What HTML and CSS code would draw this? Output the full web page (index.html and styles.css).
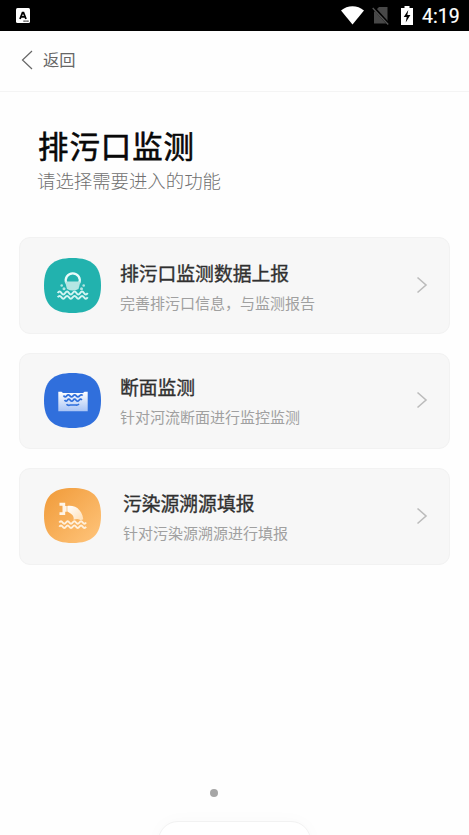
FILE: index.html
```html
<!DOCTYPE html>
<html lang="zh-CN">
<head>
<meta charset="utf-8">
<meta name="viewport" content="width=device-width, initial-scale=1">
<title>排污口监测</title>
<link rel="stylesheet" href="styles.css">
</head>
<body>
<div class="screen">
  <header class="status">
    <svg class="status-app" width="14" height="15" viewBox="0 0 14 15"><rect width="14" height="15" rx="1.5" fill="#fff"/><path d="M4 11 6.500 4.600h1L10 11M5 8.800h4" fill="none" stroke="#000" stroke-width="1.800"/><path d="M7.500 13.200h5" stroke="#000" stroke-width="1.200" stroke-dasharray="1.200 .7"/></svg>
    <div class="status-right">
      <svg width="23" height="19" viewBox="0 0 23 19"><path d="M0 4.500C6.500-1.300 16.500-1.300 23 4.500L11.500 18.500Z" fill="#fff"/></svg>
      <svg class="sim" width="18" height="19" viewBox="0 0 18 19"><path d="M7 1h8.500v16.500H2V6Z" fill="#484848"/><path d="M1.500 1.500 16.500 18" stroke="#000" stroke-width="3"/><path d="M.7 2 16.200 18.500" stroke="#555" stroke-width="1.300"/></svg>
      <svg class="battery" width="12" height="19" viewBox="0 0 12 19"><path d="M3.500 0h5v2H12v17H0V2h3.500Z" fill="#fff"/><path d="M7.300 4 2.700 11h3L4.700 16.500 9.400 9H6.300Z" fill="#000"/></svg>
      <span class="clock">4:19</span>
    </div>
  </header>
  <nav class="nav">
    <svg width="12" height="20" viewBox="0 0 12 20"><path d="M11 1 1.500 10 11 19" fill="none" stroke="#666" stroke-width="1.200"/></svg>
    <span>返回</span>
  </nav>
  <main class="main">
    <h1 class="title">排污口监测</h1>
    <p class="subtitle">请选择需要进入的功能</p>
    <div class="cards">
      <a class="card card-first">
        <svg class="icon" viewBox="0 0 57 55">
          <path d="M28.500 0C48 0 57 8 57 27.500S48 55 28.500 55 0 47 0 27.500 9 0 28.500 0Z" fill="#22b2ae"/>
          <path d="M22.300 25A7 7 0 1 1 35.200 25" fill="none" stroke="#e9fbfa" stroke-width="2.300"/>
          <path d="M21 23.500h15.500l-2 7.500q-5.700 3-11.500 0Z" fill="#b5e6e3"/>
          <g fill="#b5e6e3"><circle cx="17.700" cy="27.500" r="1.300"/><circle cx="20" cy="30.700" r="1.500"/><circle cx="39.700" cy="27.500" r="1.300"/><circle cx="37.500" cy="30.700" r="1.500"/></g>
          <path d="M13.700 35q1.900-2.800 3.750 0t3.750 0 3.750 0 3.750 0 3.750 0 3.750 0 3.750 0 3.750 0M13.700 39.300q1.900-2.800 3.750 0t3.750 0 3.750 0 3.750 0 3.750 0 3.750 0 3.750 0 3.750 0" fill="none" stroke="#d2f4f2" stroke-width="2"/>
        </svg>
        <div class="text"><h2>排污口监测数据上报</h2><p>完善排污口信息，与监测报告</p></div>
        <svg class="arrow" viewBox="0 0 12 18"><path d="M1.500 1.500 10 9 1.500 16.500" fill="none" stroke="#bcbcbc" stroke-width="1.600"/></svg>
      </a>
      <a class="card">
        <svg class="icon" viewBox="0 0 57 55">
          <defs><linearGradient id="basin" x1="0" y1="0" x2="0" y2="1"><stop offset="0" stop-color="#fff"/><stop offset="1" stop-color="#a9c4f5"/></linearGradient></defs>
          <path d="M28.500 0C48 0 57 8 57 27.500S48 55 28.500 55 0 47 0 27.500 9 0 28.500 0Z" fill="#306fdc"/>
          <path d="M14.300 18.700h3.200l1.500 1.300h20l1.500-1.300h3.200v19.500H14.300Z" fill="url(#basin)"/>
          <path d="M19.500 22.500q1.600 2.400 3.200.4t3.200 0 3.200 0 3.200 0 3.200 0 3.200-.4M20.500 27q1.500 2.200 2.900.2t2.900 0 2.900 0 2.900 0 2.900 0 2.900-.2M22.500 31.300q1.500 1.700 3.800.7h5.200q2 .5 3.500-1" fill="none" stroke="#306fdc" stroke-width="1.700"/>
        </svg>
        <div class="text"><h2>断面监测</h2><p>针对河流断面进行监控监测</p></div>
        <svg class="arrow" viewBox="0 0 12 18"><path d="M1.500 1.500 10 9 1.500 16.500" fill="none" stroke="#bcbcbc" stroke-width="1.600"/></svg>
      </a>
      <a class="card card-wide">
        <svg class="icon" viewBox="0 0 57 55">
          <defs><linearGradient id="amber" x1="0" y1="0" x2="1" y2="1"><stop offset="0" stop-color="#f09a38"/><stop offset="1" stop-color="#ffc57c"/></linearGradient><linearGradient id="plume" x1="0" y1="0" x2="1" y2="1"><stop offset="0" stop-color="#fff"/><stop offset="1" stop-color="#ffdfb5"/></linearGradient></defs>
          <path d="M28.500 0C48 0 57 8 57 27.500S48 55 28.500 55 0 47 0 27.500 9 0 28.500 0Z" fill="url(#amber)"/>
          <path d="M15.500 14.700h5.700v3.300h1.500v5.800h-1.500v3.200h-5.700v-2.700h3v-6.600h-3Z" fill="#fff5e8"/>
          <path d="M23.300 18C32 17 38 22 39.300 31.200q-2 1.500-4 .3t-5.800.3C30.500 28 27.500 25.500 23.300 23.500Z" fill="url(#plume)"/>
          <path d="M15.300 34.500q1.700-2.500 3.350 0t3.350 0 3.350 0 3.350 0 3.350 0 3.350 0 3.350 0 3.350 0M15.300 38.800q1.700-2.500 3.350 0t3.350 0 3.350 0 3.350 0 3.350 0 3.350 0 3.350 0 3.350 0" fill="none" stroke="#fff0dc" stroke-width="1.900"/>
        </svg>
        <div class="text"><h2>污染源溯源填报</h2><p>针对污染源溯源进行填报</p></div>
        <svg class="arrow" viewBox="0 0 12 18"><path d="M1.500 1.500 10 9 1.500 16.500" fill="none" stroke="#bcbcbc" stroke-width="1.600"/></svg>
      </a>
    </div>
  </main>
  <div class="dot"></div>
  <div class="sheet"></div>
</div>
</body>
</html>
```
FILE: styles.css
```css
* { box-sizing: border-box; }
body { margin: 0; font-family: "Noto Sans CJK SC", sans-serif; background: #fefefe; }
h1, h2, p { margin: 0; font-weight: 400; white-space: nowrap; }
svg { display: block; flex: none; }
.screen { height: 835px; overflow: hidden; display: flex; flex-direction: column; }
.status { height: 31px; flex: none; background: #000; display: flex; justify-content: space-between; padding: 0 10px 0 16px; }
.status-app { margin-top: 8px; }
.status-right { display: flex; padding-top: 6px; }
.sim { margin-left: 8px; }
.battery { margin-left: 11px; }
.clock { width: 37px; margin-left: 9px; font: 400 19.5px/21px Roboto, sans-serif; color: #fff; white-space: nowrap; -webkit-text-stroke: .2px #fff; }
.nav { height: 61px; flex: none; display: flex; align-items: center; gap: 10px; padding: 0 0 3px 21px; border-bottom: 1px solid #f4f4f4; font-size: 16.3px; line-height: 24px; color: #666; }
.nav span { margin-top: -2px; }
.main { padding: 31px 19px 0; }
.title { padding-left: 19px; font-size: 30.4px; letter-spacing: 1px; line-height: 44px; color: #080808; -webkit-text-stroke: .6px #080808; }
.subtitle { padding-left: 18px; font-size: 18.4px; line-height: 26px; color: #707070; font-weight: 300; }
.cards { display: flex; flex-direction: column; gap: 19px; margin-top: 44px; }
.card { height: 96.500px; display: flex; align-items: center; padding: 0 21px 1px 24px; border: 1px solid #f2f2f2; border-radius: 11px; background: #f7f7f7; }
.card-first { padding-bottom: 0; }
.icon { width: 57px; height: 55px; }
.text { flex: 1; margin-left: 19px; padding-top: 4px; }
.card-first .text { padding-top: 5px; }
.card-wide .text { margin-left: 22px; }
.text h2 { font-size: 18.8px; line-height: 30px; color: #303030; -webkit-text-stroke: .35px #303030; }
.text p { font-size: 15px; line-height: 30px; color: #a0a0a0; }
.arrow { width: 12px; height: 18px; }
.dot { width: 8px; height: 8px; flex: none; margin: 224px 0 0 210px; border-radius: 50%; background: #a6a6a6; }
.sheet { width: 153px; height: 40px; flex: none; margin: 24px 0 0 158px; border: 1px solid #f2f2f2; border-radius: 20px; background: #fff; box-shadow: 0 0 18px #00000006; }
```
